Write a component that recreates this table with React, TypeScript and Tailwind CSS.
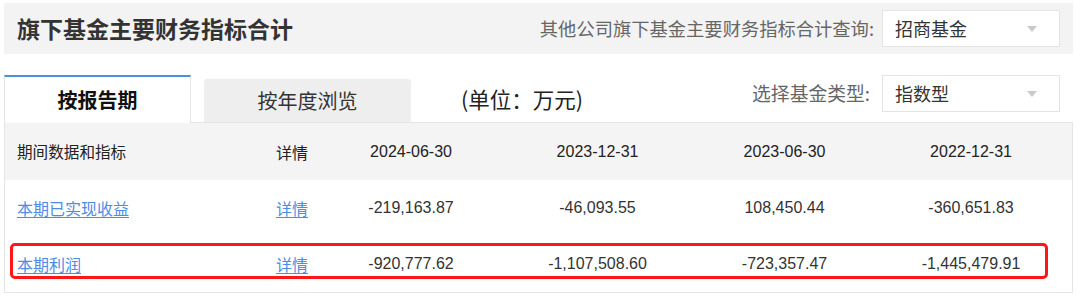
const cjk = "font-['Noto_Sans_CJK_SC','Noto_Sans',sans-serif]"
const num = "font-['Liberation_Sans','Noto_Sans_CJK_SC',sans-serif]"

const dates = ["2024-06-30", "2023-12-31", "2023-06-30", "2022-12-31"]

const rows = [
  { name: "本期已实现收益", values: ["-219,163.87", "-46,093.55", "108,450.44", "-360,651.83"], marked: false },
  { name: "本期利润", values: ["-920,777.62", "-1,107,508.60", "-723,357.47", "-1,445,479.91"], marked: true },
]

const cols = "grid grid-cols-[257px_56px_186px_187px_187px_186px_1fr]"

function Select({ value }: { value: string }) {
  return (
    <div className="w-[178px] h-[37px] bg-white border border-[#e4e4e4] flex items-center justify-between pl-[12px] pr-[22px]">
      <span className={`${cjk} text-[18px] text-[#333]`}>{value}</span>
      <svg width="10" height="6" viewBox="0 0 10 6">
        <path d="M0 0 L10 0 L5 6 Z" fill="#c9c9c9" />
      </svg>
    </div>
  )
}

export default function App() {
  return (
    <div className="w-[1080px] h-[299px] bg-white overflow-hidden pt-[3px]">
      <div className="ml-[4px] w-[1069px]">
        <div className="h-[51px] bg-[#f3f3f3] flex items-center justify-between pl-[13px] pr-[13px]">
          <h1 className={`${cjk} text-[23px] font-bold text-[#333] leading-none`}>旗下基金主要财务指标合计</h1>
          <div className="flex items-center gap-[8px]">
            <span className={`${cjk} text-[18.3px] text-[#666]`}>其他公司旗下基金主要财务指标合计查询:</span>
            <Select value="招商基金" />
          </div>
        </div>

        <div className="mt-[21px] h-[47px] flex items-start pr-[13px]">
          <div className="relative z-10 w-[187px] h-[48px] bg-white border-t-2 border-t-[#4a90e2] border-l border-r border-[#e4e4e4] flex items-center justify-center">
            <span className={`${cjk} text-[20px] font-bold text-[#111]`}>按报告期</span>
          </div>
          <div className="mt-[4px] ml-[13px] w-[207px] h-[43px] bg-[#eeeeee] rounded-t-[3px] flex items-center justify-center">
            <span className={`${cjk} text-[20px] text-[#333]`}>按年度浏览</span>
          </div>
          <div className={`${cjk} ml-[50px] mt-[8px] text-[21.5px] text-[#222]`}>(单位：万元)</div>
          <div className="ml-auto flex items-center gap-[12px]">
            <span className={`${cjk} text-[18.8px] text-[#666]`}>选择基金类型:</span>
            <div className="h-[36px] flex">
              <Select value="指数型" />
            </div>
          </div>
        </div>

        <div className="border border-[#e4e4e4]">
          <div className={`${cols} h-[57px] bg-[#f4f4f4] items-center text-[16px] text-[#222]`}>
            <span className={`${cjk} pl-[12px] text-[15.6px]`}>期间数据和指标</span>
            <span className={`${cjk} pl-[14px]`}>详情</span>
            {dates.map((d) => (
              <span key={d} className={`${num} text-center`}>{d}</span>
            ))}
            <span />
          </div>
          {rows.map((r) => (
            <div key={r.name} className={`relative ${cols} h-[56px] items-center text-[16px] text-[#333]`}>
              <a href="#" className={`${cjk} pl-[12px] text-[#4d8ce4] underline underline-offset-2`}>{r.name}</a>
              <a href="#" className={`${cjk} pl-[14px] text-[#4d8ce4] underline underline-offset-2`}>详情</a>
              {r.values.map((v, i) => (
                <span key={i} className={`${num} text-center`}>{v}</span>
              ))}
              <span />
              {r.marked && (
                <div className="absolute left-[5px] top-[7px] w-[1038px] h-[36px] border-[3px] border-[#ff1616] rounded-[5px]" />
              )}
            </div>
          ))}
        </div>
      </div>
    </div>
  )
}
